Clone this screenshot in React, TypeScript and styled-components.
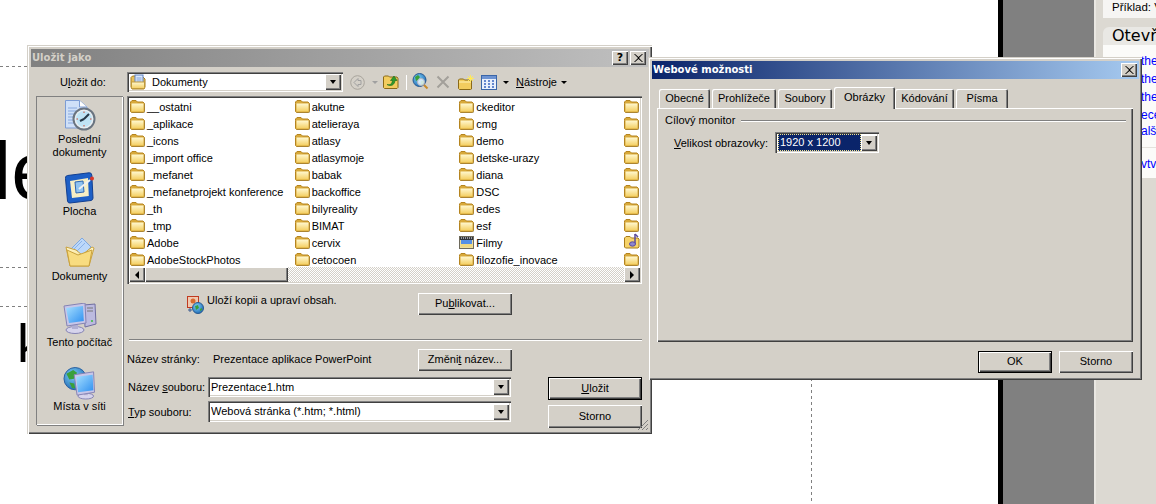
import React from "react";
import styled, { createGlobalStyle, css } from "styled-components";

const Global = createGlobalStyle`
  html, body { margin: 0; padding: 0; background: #fff; }
  body { width: 1156px; height: 504px; overflow: hidden; font-family: "Liberation Sans", "DejaVu Sans", sans-serif; font-size: 11px; color: #000; }
  * { box-sizing: border-box; }
  u { text-underline-offset: 1px; text-decoration-thickness: 1px; }
`;

const raised = css`
  background: #d4d0c8;
  box-shadow: inset 1px 1px 0 #fff, inset -1px -1px 0 #404040, inset -2px -2px 0 #808080;
`;
const sunken = css`
  box-shadow: inset 1px 1px 0 #808080, inset 2px 2px 0 #404040, inset -1px -1px 0 #fff, inset -2px -2px 0 #d4d0c8;
`;

const Desktop = styled.div`
  position: relative; width: 1156px; height: 504px; display: flex; overflow: hidden; background: #fff;
`;
const Slide = styled.div`position: relative; width: 998px; height: 504px; background: #fff; overflow: hidden;`;
const BlackEdge = styled.div`width: 5px; background: #000;`;
const GrayArea = styled.div`width: 91px; background: #808080;`;
const TaskPane = styled.aside`
  flex: 1; background: #dcd9d2; border-left: 2px solid #e9e7e2; padding-left: 7px; display: flex; flex-direction: column; overflow: hidden;
`;
const ExampleBox = styled.div`height: 18px; background: #f6f5f3; white-space: nowrap; line-height: 14px; padding: 0 0 0 9px; font-size: 11.5px;`;
const PaneHead = styled.div`
  margin-top: 9px; height: 18px; background: #e9e8e4; border-top-left-radius: 6px; padding-left: 9px; font: 16px/18px "DejaVu Sans", sans-serif; white-space: nowrap; overflow: hidden;
`;
const PaneBody = styled.div`height: 133px; background: #fbfbf9; padding: 7px 0 0 38px; display: flex; flex-direction: column; overflow: hidden;`;
const PaneLink = styled.span<{ $gap?: number }>`
  color: #0000ff; font-size: 12px; line-height: 18px; white-space: nowrap; margin-top: ${(p) => p.$gap ?? 0}px;
`;
const PaneRule = styled.div`height: 1px; background: #e4e2dd; margin: 7px 0 7px -38px; flex: none;`;

const DashH = styled.div<{ $y: number }>`
  position: absolute; left: 0; top: ${(p) => p.$y}px; width: 28px; height: 1px;
  background: repeating-linear-gradient(90deg, #808080 0 3px, transparent 3px 6px);
`;
const DashV = styled.div`
  position: absolute; left: 811px; top: 378px; width: 1px; height: 126px;
  background: repeating-linear-gradient(180deg, #808080 0 3px, transparent 3px 6px);
`;
const BigLetters = styled.div<{ $x: number; $y: number; $size: number }>`
  position: absolute; left: ${(p) => p.$x}px; top: ${(p) => p.$y}px; font: ${(p) => p.$size}px/1 "Liberation Sans", sans-serif; color: #000;
`;

const Win = styled.section<{ $x: number; $y: number; $w: number; $h: number }>`
  position: absolute; left: ${(p) => p.$x}px; top: ${(p) => p.$y}px; width: ${(p) => p.$w}px; height: ${(p) => p.$h}px;
  background: #d4d0c8; padding: 4px 3px 3px 4px; display: flex; flex-direction: column;
  box-shadow: inset 1px 1px 0 #d4d0c8, inset 2px 2px 0 #fff, inset -1px -1px 0 #404040, inset -2px -2px 0 #808080;
`;
const TitleBar = styled.header<{ $active?: boolean }>`
  height: 18px; flex: none; display: flex; align-items: center; justify-content: space-between; padding: 0 ${(p) => (p.$active ? 2 : 3)}px 0 1px;
  background: ${(p) => (p.$active ? "linear-gradient(90deg,#0a246a,#a6caf0)" : "linear-gradient(90deg,#808080,#c0c0c0)")};
  color: ${(p) => (p.$active ? "#fff" : "#d4d0c8")};
  font: bold 10px/18px "DejaVu Sans", sans-serif;
`;
const TitleButtons = styled.div`display: flex; gap: 2px;`;
const CapBtn = styled.button`
  ${raised}; width: 16px; height: 14px; border: 0; padding: 0; display: flex; align-items: center; justify-content: center;
  font: bold 11px/14px "DejaVu Sans", sans-serif; color: #000;
`;

const SaveGrid = styled.div`
  flex: 1; display: grid; grid-template-columns: 87px 515px; grid-template-rows: 20px 329px; column-gap: 4px; row-gap: 4px; padding: 5px 0 0 5px;
`;
const SaveInLabel = styled.div`display: flex; align-items: center; padding-left: 24px; padding-bottom: 1px;`;
const Toolbar = styled.div`display: flex; align-items: center; position: relative;`;
const Combo = styled.div<{ $w: number; $h?: number }>`
  ${sunken}; width: ${(p) => p.$w}px; height: ${(p) => p.$h ?? 20}px; background: #fff; display: flex; align-items: center; padding: 2px 2px 2px 3px; flex: none;
`;
const ComboText = styled.div`flex: 1; white-space: nowrap; display: flex; align-items: center; gap: 6px; overflow: hidden; padding-bottom: 1px;`;
const ComboArrow = styled.div`
  ${raised}; width: 16px; height: 16px; flex: none; display: flex; align-items: center; justify-content: center;
  &::after { content: ""; border: 3.5px solid transparent; border-top: 4px solid #000; border-bottom: 0; }
`;
const ToolSlot = styled.span<{ $ml: number }>`display: inline-flex; align-items: center; margin-left: ${(p) => p.$ml}px; flex: none;`;
const TinyArrow = styled.span<{ $ml: number; $color?: string }>`
  width: 0; height: 0; border: 3px solid transparent; border-top: 3px solid ${(p) => p.$color ?? "#000"}; border-bottom: 0; margin-left: ${(p) => p.$ml}px; flex: none;
`;
const ToolSep = styled.span`width: 1px; height: 15px; background: #fff; margin-left: 7px; flex: none;`;
const ToolLabel = styled.span`margin-left: 7px; white-space: nowrap;`;

const Places = styled.nav`
  grid-row: 2; background: #d4d0c8; box-shadow: inset 1px 1px 0 #808080, inset -1px -1px 0 #fff, 1px 1px 0 #808080;
  display: flex; flex-direction: column; padding-top: 4px;
`;
const Place = styled.div<{ $h: number }>`
  height: ${(p) => p.$h}px; flex: none; display: grid; grid-template-rows: 33px auto; align-content: start; justify-items: center; text-align: center; line-height: 13px; white-space: nowrap;
`;

const MainCol = styled.div`grid-row: 2; display: flex; flex-direction: column; width: 515px;`;
const ListBox = styled.div`
  ${sunken}; height: 188px; background: #fff; padding: 2px; display: flex; flex-direction: column; flex: none;
`;
const FileGrid = styled.div`
  height: 170px; display: grid; grid-template-columns: repeat(4, 164.67px); grid-template-rows: repeat(10, 17px); grid-auto-flow: column; padding-left: 1px; overflow: hidden;
`;
const FileItem = styled.div`display: flex; align-items: center; gap: 2px; white-space: nowrap; height: 17px;`;
const HScroll = styled.div`
  height: 15px; display: flex; flex: none; background: repeating-conic-gradient(#d4d0c8 0 25%, #fff 0 50%) 0 0 / 2px 2px;
`;
const ScrollBtn = styled.div<{ $dir: "l" | "r" }>`
  ${raised}; width: 16px; height: 15px; flex: none; display: flex; align-items: center; justify-content: center;
  &::after { content: ""; border: 4px solid transparent; ${(p) => (p.$dir === "l" ? "border-right: 4px solid #000; border-left: 0;" : "border-left: 4px solid #000; border-right: 0;")} }
`;
const ScrollThumb = styled.div`${raised}; width: 143px; height: 15px; flex: none;`;
const ScrollFill = styled.div`flex: 1;`;

const InfoRow = styled.div`margin-top: 9px; height: 22px; display: grid; grid-template-columns: 291px 94px; flex: none;`;
const InfoText = styled.div`display: flex; align-items: flex-start; gap: 3px; padding-left: 60px; white-space: nowrap; line-height: 15px;
  svg { margin-top: 3px; flex: none; }
`;
const Btn = styled.button<{ $h?: number; $def?: boolean; $w?: number }>`
  width: ${(p) => p.$w ?? 94}px; height: ${(p) => p.$h ?? 22}px; border: 0; padding: 0 0 1px; background: #d4d0c8; color: #000; font: inherit; line-height: 1;
  box-shadow: ${(p) =>
    p.$def
      ? "inset 0 0 0 1px #000, inset 2px 2px 0 #fff, inset -2px -2px 0 #404040, inset -3px -3px 0 #808080"
      : "inset 1px 1px 0 #fff, inset -1px -1px 0 #404040, inset -2px -2px 0 #808080"};
`;
const Divider = styled.hr`margin: 24px 0 0 2px; width: 513px; height: 2px; border: 0; background: #808080; box-shadow: inset 0 -1px 0 #fff; flex: none;`;
const PageRow = styled.div`
  margin-top: 8px; height: 22px; display: grid; grid-template-columns: 86px 205px 94px; align-items: center; white-space: nowrap; flex: none;
  span { padding-bottom: 2px; }
`;
const FormRow = styled.div`margin-top: 6px; display: flex; flex: none;`;
const Fields = styled.div`display: flex; flex-direction: column; gap: 4px; width: 384px;`;
const Field = styled.div`display: grid; grid-template-columns: 80px 303px; align-items: center; white-space: nowrap; padding-left: 1px;`;
const Actions = styled.div`display: flex; flex-direction: column; gap: 5px; margin-left: 37px;`;
const Grip = styled.svg`position: absolute; right: 3px; bottom: 3px;`;

const OptBody = styled.div`flex: 1; padding: 8px 6px 0 5px; display: flex; flex-direction: column;`;
const TabStrip = styled.div`display: flex; height: 21px; padding-left: 2px; gap: 2px; align-items: flex-end; position: relative; z-index: 1;`;
const Tab = styled.div<{ $w: number; $on?: boolean; $ml?: number }>`
  width: ${(p) => p.$w}px; height: ${(p) => (p.$on ? 22 : 19)}px; background: #d4d0c8; text-align: center; line-height: ${(p) => (p.$on ? 21 : 19)}px; white-space: nowrap;
  border-radius: 2px 2px 0 0; margin-bottom: ${(p) => (p.$on ? -1 : 0)}px; margin-left: ${(p) => p.$ml ?? 0}px;
  box-shadow: inset 1px 1px 0 #fff, inset -1px 0 0 #404040, inset -2px 0 0 #808080;
`;
const TabPanel = styled.div`
  height: 234px; flex: none; background: #d4d0c8; padding: 4px 7px 0 8px;
  box-shadow: inset 1px 1px 0 #fff, inset -1px -1px 0 #404040, inset -2px -2px 0 #808080;
`;
const GroupHead = styled.div`
  display: flex; align-items: center; gap: 6px; height: 16px; white-space: nowrap;
  &::after { content: ""; flex: 1; height: 2px; background: #808080; box-shadow: inset 0 -1px 0 #fff; margin-top: 2px; }
`;
const MonitorRow = styled.div`display: grid; grid-template-columns: 101px 104px; align-items: center; margin: 4px 0 0 9px; height: 21px; white-space: nowrap;`;
const Selected = styled.div`
  flex: 1; height: 17px; background: #0a246a; color: #fff; outline: 1px dotted #f3e48c; outline-offset: -1px; padding-left: 2px; line-height: 16px; white-space: nowrap;
`;
const OptFooter = styled.div`display: flex; justify-content: flex-end; gap: 7px; margin-top: 9px;`;

/* ---------- icons ---------- */
const Defs = () => (
  <svg width="0" height="0" style={{ position: "absolute" }} aria-hidden="true">
    <defs>
      <linearGradient id="fold" x1="0" y1="0" x2="0" y2="1">
        <stop offset="0" stopColor="#fff8d0" />
        <stop offset="1" stopColor="#f4cf62" />
      </linearGradient>
      <linearGradient id="scr" x1="0" y1="0" x2="1" y2="1">
        <stop offset="0" stopColor="#a8e0ff" />
        <stop offset="1" stopColor="#2f90f0" />
      </linearGradient>
      <radialGradient id="globe" cx="0.4" cy="0.35" r="0.75">
        <stop offset="0" stopColor="#7fd0f5" />
        <stop offset="1" stopColor="#1560b0" />
      </radialGradient>
    </defs>
  </svg>
);

const Folder = () => (
  <svg width="15" height="13" viewBox="0 0 15 13">
    <path d="M.5 3.500V2L2 .5h4L7.500 2H13l1.500 1.500v8l-1 1h-12l-1-1z" fill="#d8a93a" stroke="#b5841f" />
    <rect x="1.500" y="3.500" width="12" height="8" fill="url(#fold)" />
    <path d="M15 4v8l-1 1H2" stroke="#8c8470" strokeOpacity=".45" fill="none" />
  </svg>
);
const FilmFolder = () => (
  <svg width="15" height="13" viewBox="0 0 15 13">
    <rect x=".5" y=".5" width="14" height="12" fill="#eedf9c" stroke="#6e6a5c" />
    <rect x="1" y="1" width="13" height="3" fill="#30343c" />
    <path d="M2 2h1M4 2h1M6 2h1M8 2h1M10 2h1M12 2h1" stroke="#fff" />
    <rect x="2" y="4" width="11" height="4" fill="#5590e6" />
    <rect x="2" y="8" width="11" height="3" fill="#f0d880" />
  </svg>
);
const MusicFolder = () => (
  <svg width="16" height="16" viewBox="0 0 16 16" style={{ marginTop: -3 }}>
    <path d="M.5 6V5L2 3.500h4L7.500 5H14l1 1v8l-1 1H1.500l-1-1z" fill="#f6d36a" stroke="#a87c1c" />
    <path d="M11 1v10" stroke="#5a4a9a" strokeWidth="1.500" />
    <path d="M11 1l3 3" stroke="#5a4a9a" strokeWidth="1.500" />
    <ellipse cx="8.500" cy="11" rx="3" ry="2.200" fill="#8d86d0" stroke="#5a4a9a" />
  </svg>
);
const DocsSmall = () => (
  <svg width="16" height="16" viewBox="0 0 16 16">
    <path d="M1 5V3.500L2.500 2H6l1 1h6l2 2v8l-1 2H2l-1-2z" fill="#e8c05a" stroke="#a87c1c" />
    <rect x="5" y="1" width="8" height="10" fill="#dbe8fb" stroke="#5d80c0" />
    <path d="M6.500 4h5M6.500 6h5M6.500 8h5" stroke="#7f9fd8" />
    <path d="M1.500 8h13v5.500l-.7 1H2.200l-.7-1z" fill="url(#fold)" stroke="#c09a3a" />
  </svg>
);
const BackIcon = () => (
  <svg width="15" height="15" viewBox="0 0 15 15">
    <circle cx="7.500" cy="7.500" r="6.800" fill="#d4d0c8" stroke="#a8a49c" />
    <path d="M8 3.500L4 7.500l4 4V9.500h3v-4H8z" fill="none" stroke="#a0a0a0" />
  </svg>
);
const UpIcon = () => (
  <svg width="16" height="14" viewBox="0 0 16 14">
    <path d="M.5 3V2l1-1h4l1 1H14l1 1.500v9l-1 1H1.500l-1-1z" fill="#f2cc5e" stroke="#8a6a18" />
    <path d="M4 9.500c3 1 5-.5 5.500-4L7.500 5.500 11 1l3 4.500-2 0c-.3 4-3.500 6.500-8 4z" fill="#2f9a2e" stroke="#176a18" strokeWidth=".6" />
  </svg>
);
const SearchGlobe = () => (
  <svg width="17" height="18" viewBox="0 0 17 18">
    <circle cx="7.500" cy="7" r="6.500" fill="url(#globe)" stroke="#2a5a90" />
    <path d="M3 4l3-2 2 2-2 3-2 1zM9 8l3 0 0 3-3 2z" fill="#3aa03a" />
    <circle cx="9" cy="9" r="3.500" fill="#e8f4fb" fillOpacity=".85" stroke="#b4b4c0" />
    <path d="M12 12l3.500 3.500" stroke="#c88a2a" strokeWidth="2" />
  </svg>
);
const GrayX = () => (
  <svg width="14" height="14" viewBox="0 0 14 14">
    <path d="M1.500 1.500l11 11M12.500 1.500l-11 11" stroke="#a3a09a" strokeWidth="2" />
  </svg>
);
const NewFolder = () => (
  <svg width="16" height="15" viewBox="0 0 16 15">
    <path d="M.5 6V5l1-1h4l1 1h6l1 1v8l-1 .5H1.500l-1-1z" fill="#f2cc5e" stroke="#8a6a18" />
    <path d="M1 7h12" stroke="#fff2b8" />
    <path d="M12.500 0v7M9 3.500h7M10 1l5 5M15 1l-5 5" stroke="#ffe95a" />
  </svg>
);
const ViewsIcon = () => (
  <svg width="16" height="15" viewBox="0 0 16 15">
    <rect x=".5" y=".5" width="15" height="14" fill="#e8f0fc" stroke="#3a66a8" />
    <rect x="1" y="1" width="14" height="3" fill="#6d93d2" />
    <path d="M3 6h2M7 6h2M11 6h2M3 9h2M7 9h2M11 9h2M3 12h2M7 12h2M11 12h2" stroke="#3a66c0" strokeWidth="1.500" />
  </svg>
);
const PubIcon = () => (
  <svg width="17" height="18" viewBox="0 0 17 18">
    <rect x=".5" y=".5" width="11" height="11" fill="#f0c8b0" stroke="#c03a20" />
    <circle cx="6" cy="5" r="2.500" fill="#d86a30" />
    <circle cx="11" cy="12" r="5.500" fill="url(#globe)" stroke="#2a5a90" />
    <path d="M8 10l3-1 1 3-3 2zM13 13l2-1 0 2-2 1z" fill="#3aa03a" />
    <path d="M1 14h4M3 12v4" stroke="#3a5a90" />
  </svg>
);
const RecentIcon = () => (
  <svg width="32" height="31" viewBox="0 0 32 31">
    <path d="M1.500 .5h14L23 7v21H1.500z" fill="#cfe0f8" stroke="#7c9cd4" />
    <path d="M15.500 .5V7H23" fill="#fff" stroke="#7c9cd4" />
    <path d="M4 8h9M4 11h8M4 14h8M4 17h7M4 20h7M4 23h8" stroke="#87a8de" />
    <circle cx="20" cy="19" r="10.500" fill="#e8eef2" stroke="#6a7480" strokeWidth="2" />
    <circle cx="20" cy="19" r="8" fill="#bfe3f5" />
    <path d="M20 19l5-5M20 19l-4 2" stroke="#263848" strokeWidth="2" />
    <path d="M20 11.500v1.500M20 25v1.500M12.500 19h1.500M26 19h1.500" stroke="#d04a30" />
  </svg>
);
const DesktopIcon = () => (
  <svg width="32" height="32" viewBox="0 0 32 32">
    <path d="M1.500 6.500Q1 4 3.500 3.500L25 .8Q27.500 .5 27.800 3L29 26q0 2-2 2.500L6 31q-2 .3-2.500-2z" fill="#1d5fc6" stroke="#123f90" />
    <path d="M6 9l18-3 .8 18L8 26z" fill="#f6eec4" />
    <path d="M11 10l8-1 1 11-8 1z" fill="#8fc3f0" stroke="#2c66b4" />
    <path d="M15 17l11-9" stroke="#f0f0f0" strokeWidth="2" />
    <circle cx="28" cy="6.500" r="2" fill="#d8382a" />
  </svg>
);
const DocsIcon = () => (
  <svg width="32" height="32" viewBox="0 0 32 32">
    <path d="M7 12L18 1l9 9-10 11z" fill="#bcd8fa" stroke="#7ea8e0" />
    <path d="M10 12l8-8M13 14l8-8" stroke="#8ab2e8" />
    <path d="M2 10l10 3 6 5 10-8 2 1-5 18H6z" fill="url(#fold)" stroke="#c9a23e" />
    <path d="M6 29L3 13l11 5 14-5-3 16z" fill="#f8dc80" stroke="#c9a23e" />
  </svg>
);
const ComputerIcon = () => (
  <svg width="34" height="31" viewBox="0 0 34 31">
    <path d="M21 2l11-1 1 20-11 3z" fill="#bcbadf" stroke="#6f6da0" />
    <path d="M24 5h6M24 8h6" stroke="#777" />
    <circle cx="29" cy="18" r="1" fill="#38c038" />
    <ellipse cx="12" cy="27" rx="9" ry="3.500" fill="#d6d4ec" stroke="#8583b4" />
    <path d="M9 21h6v5H9z" fill="#b0aed2" />
    <path d="M1 3l21-3 1 20-19 3z" fill="#c8c6e8" stroke="#8583b4" />
    <path d="M3 5l17-2 .8 15L6 20z" fill="url(#scr)" />
  </svg>
);
const NetworkIcon = () => (
  <svg width="33" height="33" viewBox="0 0 33 34">
    <circle cx="12" cy="12" r="11.500" fill="url(#globe)" stroke="#2c5f9e" />
    <path d="M3 7l7-4 4 3-3 6-5 1zM6 16l5 1 1 5-3 0z" fill="#3aa03a" />
    <ellipse cx="23" cy="30" rx="8" ry="3" fill="#d6d4ec" stroke="#8583b4" />
    <path d="M21 26h4v3h-4z" fill="#b0aed2" />
    <path d="M11 8l20-3 1 21-18 3z" fill="#c8c6e8" stroke="#8583b4" />
    <path d="M13 10l17-2 .8 16L15 26z" fill="url(#scr)" />
  </svg>
);
const CloseGlyph = () => (
  <svg width="9" height="8" viewBox="0 0 9 8"><path d="M1 0l3.500 3L8 0h1L5 4l4 4H8L4.500 5 1 8H0l4-4-4-4z" /></svg>
);

const col1 = ["__ostatni", "_aplikace", "_icons", "_import office", "_mefanet", "_mefanetprojekt konference", "_th", "_tmp", "Adobe", "AdobeStockPhotos"];
const col2 = ["akutne", "atelieraya", "atlasy", "atlasymoje", "babak", "backoffice", "bilyreality", "BIMAT", "cervix", "cetocoen"];
const col3 = ["ckeditor", "cmg", "demo", "detske-urazy", "diana", "DSC", "edes", "esf", "Filmy", "filozofie_inovace"];

export default function App() {
  return (
    <>
      <Global />
      <Defs />
      <Desktop>
        <Slide>
          <DashH $y={66} />
          <DashH $y={267} />
          <DashH $y={306} />
          <BigLetters $x={-7} $y={130} $size={82}>le</BigLetters>
          <BigLetters $x={17} $y={316} $size={54}>k</BigLetters>
          <DashV />
        </Slide>
        <BlackEdge />
        <GrayArea />
        <TaskPane>
          <ExampleBox>Příklad: V</ExampleBox>
          <PaneHead>Otevř</PaneHead>
          <PaneBody>
            <PaneLink>the</PaneLink>
            <PaneLink>the</PaneLink>
            <PaneLink>the</PaneLink>
            <PaneLink>ecel</PaneLink>
            <PaneLink $gap={-2}>alší</PaneLink>
            <PaneRule />
            <PaneLink>vtv</PaneLink>
          </PaneBody>
        </TaskPane>

        <Win $x={27} $y={45} $w={625} $h={389}>
          <TitleBar>
            <span>Uložit jako</span>
            <TitleButtons>
              <CapBtn>?</CapBtn>
              <CapBtn><CloseGlyph /></CapBtn>
            </TitleButtons>
          </TitleBar>
          <SaveGrid>
            <SaveInLabel><span>U<u>l</u>ožit do:</span></SaveInLabel>
            <Toolbar>
              <Combo $w={216}>
                <ComboText><DocsSmall /> Dokumenty</ComboText>
                <ComboArrow />
              </Combo>
              <ToolSlot $ml={7}><BackIcon /></ToolSlot>
              <TinyArrow $ml={7} $color="#a0a0a0" />
              <ToolSlot $ml={5}><UpIcon /></ToolSlot>
              <ToolSep />
              <ToolSlot $ml={5}><SearchGlobe /></ToolSlot>
              <ToolSlot $ml={7}><GrayX /></ToolSlot>
              <ToolSlot $ml={8}><NewFolder /></ToolSlot>
              <ToolSlot $ml={7}><ViewsIcon /></ToolSlot>
              <TinyArrow $ml={6} />
              <ToolLabel><u>N</u>ástroje</ToolLabel>
              <TinyArrow $ml={4} />
            </Toolbar>
            <Places>
              <Place $h={72}><RecentIcon /><span>Poslední<br />dokumenty</span></Place>
              <Place $h={65}><DesktopIcon /><span>Plocha</span></Place>
              <Place $h={66}><DocsIcon /><span>Dokumenty</span></Place>
              <Place $h={64}><ComputerIcon /><span>Tento počítač</span></Place>
              <Place $h={56}><NetworkIcon /><span>Místa v síti</span></Place>
            </Places>
            <MainCol>
              <ListBox>
                <FileGrid>
                  {col1.map((n) => <FileItem key={n}><Folder />{n}</FileItem>)}
                  {col2.map((n) => <FileItem key={n}><Folder />{n}</FileItem>)}
                  {col3.map((n) => <FileItem key={n}>{n === "Filmy" ? <FilmFolder /> : <Folder />}{n}</FileItem>)}
                  {col3.map((n) => <FileItem key={n}>{n === "Filmy" ? <MusicFolder /> : <Folder />}</FileItem>)}
                </FileGrid>
                <HScroll>
                  <ScrollBtn $dir="l" />
                  <ScrollThumb />
                  <ScrollFill />
                  <ScrollBtn $dir="r" />
                </HScroll>
              </ListBox>
              <InfoRow>
                <InfoText><PubIcon /><span>Uloží kopii a upraví obsah.</span></InfoText>
                <Btn>Pu<u>b</u>likovat...</Btn>
              </InfoRow>
              <Divider />
              <PageRow>
                <span>Název stránky:</span>
                <span>Prezentace aplikace PowerPoint</span>
                <Btn>Změni<u>t</u> název...</Btn>
              </PageRow>
              <FormRow>
                <Fields>
                  <Field>
                    <span>Název <u>s</u>ouboru:</span>
                    <Combo $w={303}>
                      <ComboText>Prezentace1.htm</ComboText>
                      <ComboArrow />
                    </Combo>
                  </Field>
                  <Field>
                    <span><u>T</u>yp souboru:</span>
                    <Combo $w={303} $h={21}>
                      <ComboText>Webová stránka (*.htm; *.html)</ComboText>
                      <ComboArrow />
                    </Combo>
                  </Field>
                </Fields>
                <Actions>
                  <Btn $def $h={23}><u>U</u>ložit</Btn>
                  <Btn $h={23}>Storno</Btn>
                </Actions>
              </FormRow>
            </MainCol>
          </SaveGrid>
          <Grip width="12" height="12" viewBox="0 0 12 12">
            <path d="M11 1L1 11M11 5L5 11M11 9L9 11" stroke="#808080" strokeWidth="1" />
          </Grip>
        </Win>

        <Win $x={648} $y={57} $w={494} $h={323}>
          <TitleBar $active>
            <span>Webové možnosti</span>
            <CapBtn><CloseGlyph /></CapBtn>
          </TitleBar>
          <OptBody>
            <TabStrip>
              <Tab $w={51}>Obecné</Tab>
              <Tab $w={64}>Prohlížeče</Tab>
              <Tab $w={54}>Soubory</Tab>
              <Tab $w={61} $on>Obrázky</Tab>
              <Tab $w={59} $ml={-2}>Kódování</Tab>
              <Tab $w={52}>Písma</Tab>
            </TabStrip>
            <TabPanel>
              <GroupHead>Cílový monitor</GroupHead>
              <MonitorRow>
                <span><u>V</u>elikost obrazovky:</span>
                <Combo $w={104} $h={21}>
                  <Selected>1920 x 1200</Selected>
                  <ComboArrow />
                </Combo>
              </MonitorRow>
            </TabPanel>
            <OptFooter>
              <Btn $def $w={74}>OK</Btn>
              <Btn $w={74}>Storno</Btn>
            </OptFooter>
          </OptBody>
        </Win>
      </Desktop>
    </>
  );
}
